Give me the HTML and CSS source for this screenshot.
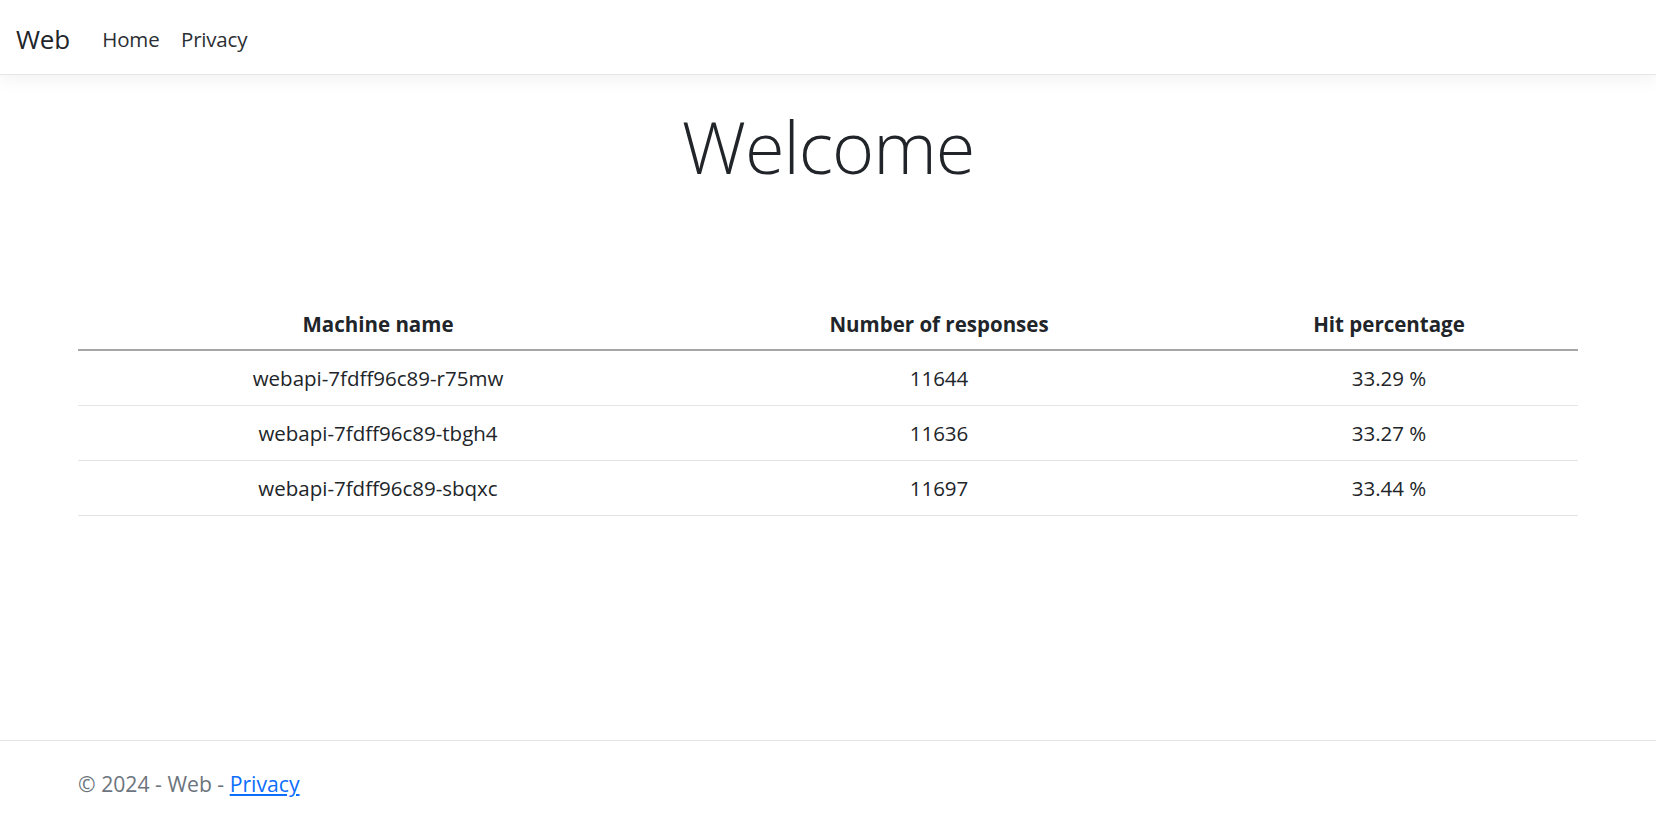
FILE: index.html
```html
<!DOCTYPE html>
<html lang="en">
<head>
<meta charset="utf-8">
<title>Home page - Web</title>
<link rel="stylesheet" href="styles.css">
</head>
<body>
<header>
  <nav class="navbar">
    <div class="navbar-inner">
      <a class="brand" href="#">Web</a>
      <ul class="nav">
        <li><a class="nav-link" href="#">Home</a></li>
        <li><a class="nav-link" href="#">Privacy</a></li>
      </ul>
    </div>
  </nav>
</header>
<div class="container main-wrap">
  <main class="main">
    <div class="text-center">
      <h1 class="display">Welcome</h1>
      <table class="stats">
        <colgroup>
          <col class="c1"><col class="c2"><col class="c3">
        </colgroup>
        <thead>
          <tr><th>Machine name</th><th>Number of responses</th><th>Hit percentage</th></tr>
        </thead>
        <tbody>
          <tr><td>webapi-7fdff96c89-r75mw</td><td>11644</td><td>33.29 %</td></tr>
          <tr><td>webapi-7fdff96c89-tbgh4</td><td>11636</td><td>33.27 %</td></tr>
          <tr><td>webapi-7fdff96c89-sbqxc</td><td>11697</td><td>33.44 %</td></tr>
        </tbody>
      </table>
    </div>
  </main>
</div>
<footer class="footer">
  <div class="container">
    &copy; 2024 - Web - <a href="#" class="footer-link">Privacy</a>
  </div>
</footer>
</body>
</html>
```

FILE: styles.css
```css
* { box-sizing: border-box; }

html, body { height: 100%; }

body {
  margin: 0;
  font-family: "Open Sans", "Noto Sans", sans-serif;
  font-size: 20.5px;
  line-height: 32.4px;
  color: #212529;
  background: #fff;
  display: flex;
  flex-direction: column;
  min-height: 100vh;
}

.navbar {
  height: 75px;
  border-bottom: 1px solid #e5e5e5;
  box-shadow: 0 5px 16px rgba(0, 0, 0, 0.05);
  margin-bottom: 21.6px;
  display: flex;
  align-items: center;
}

.navbar-inner {
  display: flex;
  align-items: center;
  padding: 4px 16px 0;
  width: 100%;
}

.brand {
  font-size: 26px;
  color: #212529;
  text-decoration: none;
  margin-right: 21.6px;
  line-height: 40px;
  letter-spacing: -0.2px;
}

.nav {
  list-style: none;
  margin: 0;
  padding: 0;
  display: flex;
}

.nav-link {
  display: block;
  padding: 0 10.8px;
  color: #2b2f33;
  text-decoration: none;
  letter-spacing: -0.2px;
}

.container {
  width: 100%;
  max-width: 1500px;
  margin: 0 auto;
}

.main-wrap { flex: 1; }

.text-center { text-align: center; }

.display {
  font-size: 72px;
  font-weight: 300;
  line-height: 90.7px;
  letter-spacing: -1px;
  margin: 4.5px 0 103.5px;
}

.stats {
  width: 100%;
  border-collapse: collapse;
}

.c1 { width: 40%; }
.c2 { width: 34.8%; }
.c3 { width: 25.2%; }

.stats th,
.stats td {
  text-align: center;
  padding-left: 10.8px;
  padding-right: 10.8px;
}

.stats th {
  font-weight: 700;
  padding-top: 12.3px;
  padding-bottom: 9.3px;
  border-bottom: 2px solid #a6a6a6;
}

.stats td {
  padding-top: 10.8px;
  padding-bottom: 10.8px;
  border-bottom: 1px solid #e4e4e4;
}

.footer {
  border-top: 1px solid #e5e5e5;
  height: 81px;
  line-height: 80px;
  font-size: 21.2px;
  color: #6c757d;
  white-space: nowrap;
  padding-top: 3px;
}

.footer-link {
  color: #0d6efd;
  text-decoration: underline;
}
```
